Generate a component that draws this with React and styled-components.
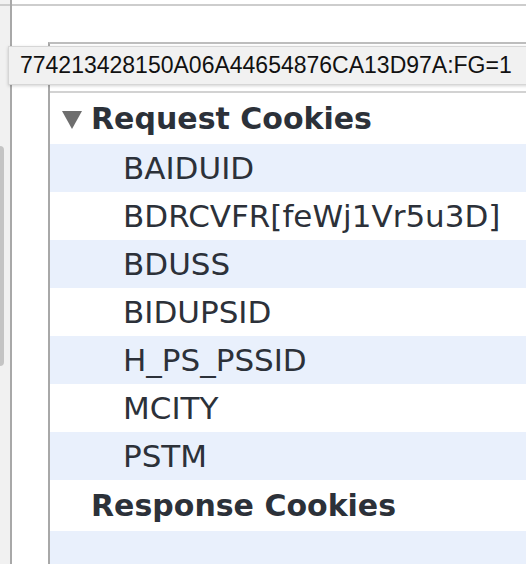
import React from 'react';
import styled, { createGlobalStyle } from 'styled-components';

const requestCookies = [
	'BAIDUID',
	'BDRCVFR[feWj1Vr5u3D]',
	'BDUSS',
	'BIDUPSID',
	'H_PS_PSSID',
	'MCITY',
	'PSTM',
];

const App = () => (
	<>
		<GlobalStyle />
		<Frame>
			<Gutter>
				<Cap />
				<ScrollThumb />
			</Gutter>
			<Main>
				<Cap />
				<PanelArea>
					<Panel>
						<PanelHead />
						<Group>
							<GroupTitle>
								<Disclosure />
								Request Cookies
							</GroupTitle>
							{requestCookies.map((name, i) => (
								<Row key={name} striped={i % 2 === 0}>
									{name}
								</Row>
							))}
						</Group>
						<Group>
							<GroupTitle>Response Cookies</GroupTitle>
							<Row striped />
						</Group>
					</Panel>
				</PanelArea>
			</Main>
			<Tooltip>774213428150A06A44654876CA13D97A:FG=1</Tooltip>
		</Frame>
	</>
);

const Disclosure = () => (
	<Triangle viewBox="0 0 20 19" aria-hidden="true">
		<path d="M0 1 H20 L10 19 Z" fill="#6e6e6e" />
	</Triangle>
);

const GlobalStyle = createGlobalStyle`
	html, body {
		margin: 0;
		padding: 0;
		background: #fff;
	}
	body {
		font-family: 'DejaVu Sans', 'Open Sans', sans-serif;
		color: #2c3139;
	}
`;

const Frame = styled.div`
	position: relative;
	display: flex;
	width: 526px;
	height: 564px;
	overflow: hidden;
	background: #fff;
`;

const Cap = styled.div`
	height: 4px;
	flex-shrink: 0;
	border-bottom: 2px solid #cdcdcd;
`;

const Gutter = styled.div`
	width: 10px;
	flex-shrink: 0;
	display: flex;
	flex-direction: column;
	background: #f1f1f1;
	border-right: 2px solid #a8a8a8;
`;

const ScrollThumb = styled.div`
	margin-top: 140px;
	width: 4px;
	height: 220px;
	background: #c4c4c4;
	border-radius: 0 4px 4px 0;
`;

const Main = styled.div`
	flex: 1;
	display: flex;
	flex-direction: column;
	min-width: 0;
`;

const PanelArea = styled.div`
	flex: 1;
	padding: 36px 0 0 36px;
	display: flex;
`;

const Panel = styled.div`
	flex: 1;
	border-left: 2px solid #a8a8a8;
	border-top: 2px solid #bdbdbd;
	display: flex;
	flex-direction: column;
`;

const PanelHead = styled.div`
	height: 47px;
	border-bottom: 2px solid #d2d2d2;
`;

const Group = styled.div`
	display: flex;
	flex-direction: column;
`;

const GroupTitle = styled.div`
	display: flex;
	align-items: center;
	height: 48px;
	padding-left: 41px;
	font-size: 30px;
	font-weight: 700;
	color: #2c3139;
	white-space: nowrap;

	&:first-child {
		height: 51px;
	}
`;

const Triangle = styled.svg`
	width: 20px;
	height: 19px;
	margin-left: -29px;
	margin-right: 9px;
	margin-top: 2px;
`;

const Row = styled.div`
	height: 48px;
	display: flex;
	align-items: center;
	padding-left: 73px;
	font-size: 31px;
	white-space: nowrap;
	background: ${(p) => (p.striped ? '#e9f0fc' : '#fff')};
`;

const Tooltip = styled.div`
	position: absolute;
	top: 46px;
	left: 8px;
	right: -10px;
	height: 37px;
	display: flex;
	align-items: center;
	padding-left: 11px;
	background: #f1f1f1;
	border: 1px solid #d6d6d6;
	box-shadow: 0 1px 3px rgba(0, 0, 0, 0.18);
	font-family: 'Liberation Sans', Arial, sans-serif;
	font-size: 23px;
	color: #111;
	white-space: nowrap;
`;

export default App;
